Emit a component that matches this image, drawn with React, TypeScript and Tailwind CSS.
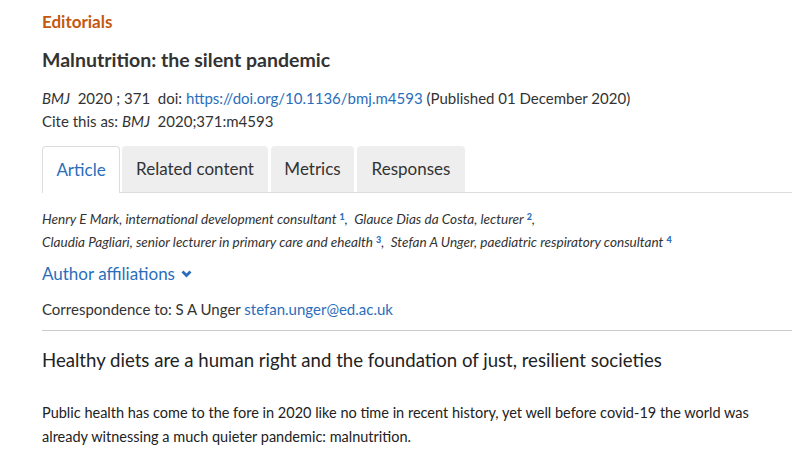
const Sup = ({ n }: { n: string }) => (
  <sup className="ml-[3px] text-[9px] not-italic font-black text-[#2a6ebb]">{n}</sup>
);

const App = () => {
  return (
    <div className="min-h-screen bg-white text-[#333] pl-[42px]" style={{ fontFamily: 'Lato, "Open Sans", sans-serif' }}>
      <div className="pt-[12px]">
        <p className="text-[17px] font-bold leading-[20px] text-[#c4580f]">Editorials</p>
        <h1 className="mt-[16px] text-[19.5px] font-bold leading-[24px] text-[#333]">Malnutrition: the silent pandemic</h1>
        <p className="mt-[15px] text-[15px] leading-[23px]">
          <i>BMJ</i>&nbsp; 2020 ; 371&nbsp; doi:{' '}
          <a href="#" className="text-[#2a6ebb]">https://doi.org/10.1136/bmj.m4593</a> (Published 01 December 2020)
        </p>
        <p className="text-[15px] leading-[23px]">
          Cite this as: <i>BMJ</i>&nbsp; 2020;371:m4593
        </p>
      </div>

      {/* Tabs */}
      <div className="mt-[13px] flex items-end">
        <div className="flex h-[47px] w-[78px] items-center justify-center rounded-t-[4px] border border-b-0 border-[#dddddd] text-[17px] text-[#2a6ebb]">
          Article
        </div>
        <div className="flex flex-1 items-end gap-[3px] border-b border-[#dddddd] pl-[2px]">
          <div className="flex h-[46px] w-[146px] items-center justify-center rounded-t-[4px] bg-[#eeeeee] text-[17px]">Related content</div>
          <div className="flex h-[46px] w-[83px] items-center justify-center rounded-t-[4px] bg-[#eeeeee] text-[17px]">Metrics</div>
          <div className="flex h-[46px] w-[108px] items-center justify-center rounded-t-[4px] bg-[#eeeeee] text-[17px]">Responses</div>
        </div>
      </div>

      {/* Authors */}
      <div className="mt-[15px] text-[13.6px] italic leading-[23px] text-[#333]">
        <p>
          Henry E Mark, international development consultant<Sup n="1" />,&nbsp; Glauce Dias da Costa, lecturer<Sup n="2" />,
        </p>
        <p>
          Claudia Pagliari, senior lecturer in primary care and ehealth<Sup n="3" />,&nbsp; Stefan A Unger, paediatric respiratory consultant<Sup n="4" />
        </p>
      </div>

      <div className="mt-[10px] flex items-center gap-[6px] text-[17px] leading-[20px] text-[#2a6ebb]">
        <span>Author affiliations</span>
        <svg width="11" height="8" viewBox="0 0 11 8" fill="none">
          <path d="M1.5 1.5L5.5 5.5L9.5 1.5" stroke="#2a6ebb" strokeWidth="2.8" />
        </svg>
      </div>

      <p className="mt-[15px] text-[15px] leading-[20px]">
        Correspondence to: S A Unger <a href="#" className="text-[#2a6ebb]">stefan.unger@ed.ac.uk</a>
      </p>

      <div className="mt-[11px] border-t border-[#cccccc]" />

      <h2 className="mt-[17px] text-[18.6px] leading-[24px] text-[#222]">
        Healthy diets are a human right and the foundation of just, resilient societies
      </h2>

      <p className="mt-[29px] pr-[20px] text-[14.5px] leading-[24px] text-[#222]">
        Public health has come to the fore in 2020 like no time in recent history, yet well before covid-19 the world was already witnessing a much quieter pandemic: malnutrition.
      </p>
    </div>
  );
};

export default App;
